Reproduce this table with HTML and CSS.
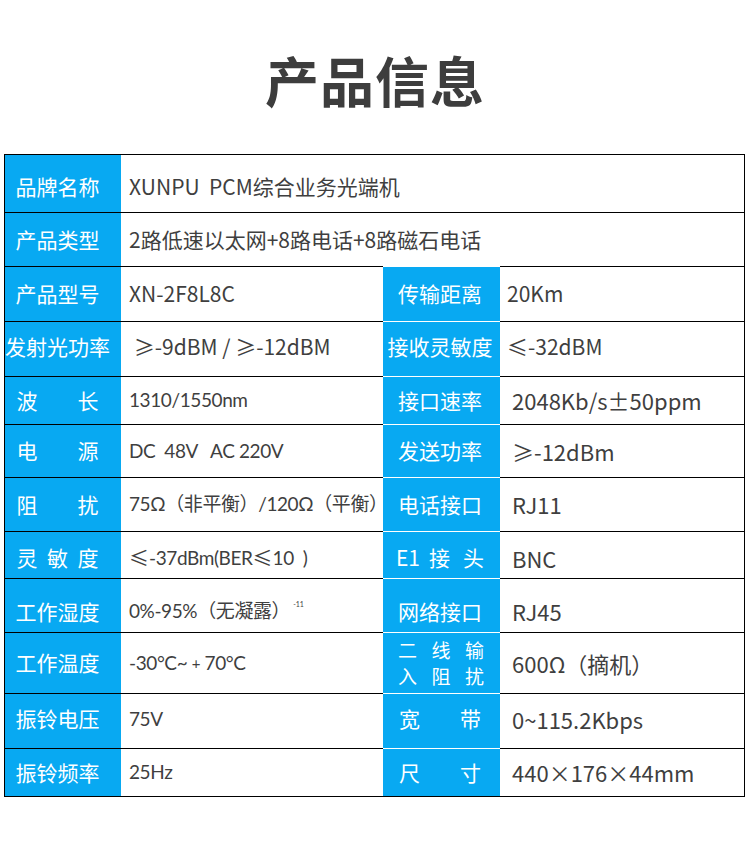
FILE: index.html
```html
<!DOCTYPE html>
<html lang="zh-CN">
<head>
<meta charset="utf-8">
<title>产品信息</title>
<link rel="stylesheet" href="styles.css">
</head>
<body>
<div class="page">
  <h1 class="title">产品信息</h1>
  <div class="spec">
    <div class="row full r1">
      <div class="lab">品牌名称</div>
      <div class="val">XUNPU&nbsp;&nbsp;PCM综合业务光端机</div>
    </div>
    <div class="row full r2">
      <div class="lab">产品类型</div>
      <div class="val">2路低速以太网+8路电话+8路磁石电话</div>
    </div>
    <div class="row r3">
      <div class="lab">产品型号</div>
      <div class="val">XN-2F8L8C</div>
      <div class="lab2">传输距离</div>
      <div class="val2">20Km</div>
    </div>
    <div class="row r4">
      <div class="lab">发射光功率</div>
      <div class="val">&nbsp;≥-9dBM / ≥-12dBM</div>
      <div class="lab2">接收灵敏度</div>
      <div class="val2">≤-32dBM</div>
    </div>
    <div class="row r5">
      <div class="lab"><span class="spread">波 长</span></div>
      <div class="val lato">1310/1550nm</div>
      <div class="lab2">接口速率</div>
      <div class="val2 big">2048Kb/s±50ppm</div>
    </div>
    <div class="row r6">
      <div class="lab"><span class="spread">电 源</span></div>
      <div class="val lato">DC&nbsp; 48V &nbsp;&nbsp;AC 220V</div>
      <div class="lab2">发送功率</div>
      <div class="val2 big">≥-12dBm</div>
    </div>
    <div class="row r7">
      <div class="lab"><span class="spread">阻 扰</span></div>
      <div class="val lato">75Ω（非平衡）/120Ω（平衡）</div>
      <div class="lab2">电话接口</div>
      <div class="val2 big">RJ11</div>
    </div>
    <div class="row r8">
      <div class="lab"><span class="spread">灵 敏 度</span></div>
      <div class="val lato"><span class="sym">≤</span>-37dBm(BER<span class="sym">≤</span>10&nbsp;&nbsp;)</div>
      <div class="lab2"><span class="spread wide">E1 接 头</span></div>
      <div class="val2 big">BNC</div>
    </div>
    <div class="row r9">
      <div class="lab">工作湿度</div>
      <div class="val lato">0%-95%（无凝露）<sup class="tiny">-11</sup></div>
      <div class="lab2">网络接口</div>
      <div class="val2 big">RJ45</div>
    </div>
    <div class="row r10">
      <div class="lab">工作温度</div>
      <div class="val lato">-30°C~&nbsp;<span class="plus">+</span>&nbsp;70°C</div>
      <div class="lab2"><span class="stack"><span class="spread">二 线 输</span><span class="spread">入 阻 扰</span></span></div>
      <div class="val2 big">600Ω（摘机）</div>
    </div>
    <div class="row r11">
      <div class="lab">振铃电压</div>
      <div class="val lato">75V</div>
      <div class="lab2"><span class="spread">宽 带</span></div>
      <div class="val2 big">0~115.2Kbps</div>
    </div>
    <div class="row r12">
      <div class="lab">振铃频率</div>
      <div class="val lato">25Hz</div>
      <div class="lab2"><span class="spread">尺 寸</span></div>
      <div class="val2 big">440×176×44mm</div>
    </div>
  </div>
</div>
</body>
</html>
```

FILE: styles.css
```css
* { box-sizing: border-box; }
html, body { margin: 0; padding: 0; background: #fff; }
body {
  font-family: "Noto Sans CJK SC", "Noto Sans", sans-serif;
  color: #3d3d3d;
}
.page { width: 750px; }
.title {
  margin: 0;
  padding-top: 53px;
  height: 154px;
  font-size: 54px;
  line-height: 54px;
  font-weight: 700;
  text-align: center;
  color: #3d3d3d;
  letter-spacing: 1px;
}
.spec {
  margin-left: 4px;
  width: 741px;
  border: 1px solid #000;
}
.row {
  display: grid;
  grid-template-columns: 116px 262px 117px 244px;
}
.row.full { grid-template-columns: 116px 623px; }
.row > div {
  border-top: 1px solid #000;
  display: flex;
  align-items: center;
}
.row.r1 > div { border-top: 0; }
.r1 { height: 57px; }
.r2 { height: 54px; }
.r3 { height: 55px; }
.r4 { height: 55px; }
.r5 { height: 48px; }
.r6 { height: 53px; }
.r7 { height: 54px; }
.r8 { height: 47px; }
.r9 { height: 54px; }
.r10 { height: 61px; }
.r11 { height: 55px; }
.r12 { height: 48px; }
.r1 > div { padding-top: 7px; }
.r4 > div { padding-bottom: 4px; }
.r8 > div { padding-top: 6px; }
.r9 > div { padding-top: 12px; }
.r11 > div { padding-bottom: 4px; }

.lab, .lab2 {
  background: #08a9f2;
  color: #fff;
  font-size: 21px;
  line-height: 1.2;
  justify-content: center;
  white-space: nowrap;
}
.lab { padding-right: 11px; }
.lab2 { padding-right: 3px; }
.row > .lab2 { border-top-color: #fff; }
.spread {
  display: block;
  width: 82px;
  text-align: justify;
  text-align-last: justify;
}
.spread.wide { width: 88px; }
.stack {
  display: flex;
  flex-direction: column;
  font-size: 19px;
  line-height: 26px;
}
.stack .spread { width: 86px; margin-left: 2px; }

.val, .val2 {
  font-size: 21px;
  line-height: 1.2;
  color: #3f3f3f;
  white-space: nowrap;
}
.val { padding-left: 8px; }
.val2 { padding-left: 7px; }
.val2.big { font-size: 22px; padding-left: 12px; }
.lato {
  font-family: Lato, "Noto Sans CJK SC", sans-serif;
  font-size: 19px;
  letter-spacing: -0.4px;
}
.sym {
  font-family: "Noto Sans CJK SC", sans-serif;
  font-size: 20px;
  letter-spacing: 0;
}
.tiny {
  font-size: 7px;
  position: relative;
  top: -7px;
  margin-left: 3px;
  letter-spacing: 0;
}
.plus { font-size: 15px; }
```
